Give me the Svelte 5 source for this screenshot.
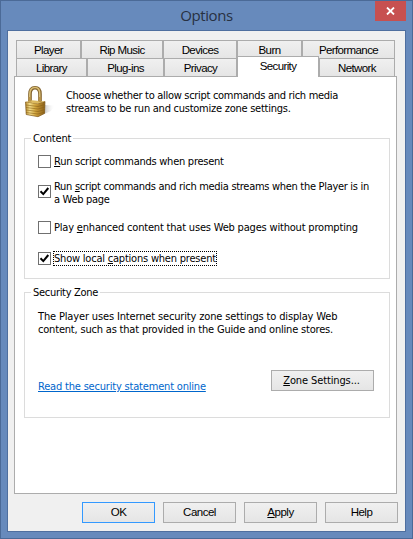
<script>
  const back = [['Player', 65], ['Rip Music', 82], ['Devices', 74], ['Burn', 65], ['Performance', 93]];
  const front = [['Library', 71], ['Plug-ins', 77], ['Privacy', 73], ['Security', 82], ['Network', 76]];
</script>

<div class="window">
  <header>
    <h1>Options</h1>
    <button class="close" aria-label="Close">
      <svg width="9" height="8" viewBox="0 0 9 8"><path d="M1 .5L8 7.5M8 .5L1 7.5" stroke="#fff" stroke-width="1.8" /></svg>
    </button>
  </header>
  <main>
    <nav class="back">
      {#each back as [name, w]}<button class="tab" style:width="{w}px"><span>{name}</span></button>{/each}
    </nav>
    <nav class="front">
      {#each front as [name, w]}<button class="tab" class:active={name === 'Security'} style:width="{w}px"><span>{name}</span></button>{/each}
    </nav>
    <section class="page">
      <div class="intro">
        <svg width="32" height="33" viewBox="0 0 32 33">
          <defs>
            <linearGradient id="brass"><stop offset="0" stop-color="#b98c2e" /><stop offset=".22" stop-color="#f3dd8c" /><stop offset=".5" stop-color="#d3a840" /><stop offset=".62" stop-color="#c09132" /><stop offset="1" stop-color="#8a611a" /></linearGradient>
            <linearGradient id="shade"><stop offset="0" stop-color="#a8a8a8" /><stop offset="1" stop-color="#fff" stop-opacity="0" /></linearGradient>
          </defs>
          <path d="M20 20L31 20.500L27 26L20 29Z" fill="url(#shade)" opacity=".7" />
          <path d="M6 18V9Q6 2.700 11 2.700Q16 2.700 16 9V18" fill="none" stroke="#80602a" stroke-width="3.600" />
          <path d="M5.800 18V9Q6 2.500 11 2.500Q15.800 2.500 15.800 9V18" fill="none" stroke="#d8bd74" stroke-width="1.600" />
          <path d="M1.500 17L13.500 18.500L21 16.500L20.500 28.500L14 31.700L2.200 29.500Z" fill="url(#brass)" stroke="#80591b" stroke-width=".7" />
          <path d="M2 20L14 21.500L21 19.500M2 22.500L14 24L21 22M2 25L14 26.500L21 24.500M2 27.500L14 29L21 27" fill="none" stroke="#8a6218" stroke-width=".8" opacity=".75" />
          <path d="M1.500 17L8 15.300L21 16.500L13.500 18.500Z" fill="#dcb95e" />
          <path d="M5.800 12V16.500M15.900 12V17" stroke="#b8934a" stroke-width="2.600" />
        </svg>
        <p><span class="i1">Choose whether to allow script commands and rich media</span><br /><span class="i2">streams to be run and customize zone settings.</span></p>
      </div>
      <fieldset class="content">
        <legend>Content</legend>
        <label class="c1"><i class="box"></i><span class="l1"><u>R</u>un script commands when present</span></label>
        <label class="c2"><i class="box">{@render tick()}</i><span class="l2">Run <u>s</u>cript commands and rich media streams when the Player is in<br />a Web page</span></label>
        <label class="c3"><i class="box"></i><span class="l3">Play <u>e</u>nhanced content that uses Web pages without prompting</span></label>
        <label class="c4"><i class="box">{@render tick()}</i><span class="l4 focus">Show local <u>c</u>aptions when present</span></label>
      </fieldset>
      <fieldset class="zone">
        <legend>Security Zone</legend>
        <p><span class="z1">The Player uses Internet security zone settings to display Web</span><br /><span class="z2">content, such as that provided in the Guide and online stores.</span></p>
        <div class="actions">
          <a href="#statement">Read the security statement online</a>
          <button class="push wide"><u>Z</u>one Settings...</button>
        </div>
      </fieldset>
    </section>
    <footer>
      <button class="push default">OK</button>
      <button class="push">Cancel</button>
      <button class="push"><u>A</u>pply</button>
      <button class="push">Help</button>
    </footer>
  </main>
</div>

{#snippet tick()}
  <svg width="11" height="11" viewBox="0 0 11 11"><path d="M1.500 5.200L4.300 8.100L9.300 2" fill="none" stroke="#000" stroke-width="2" /></svg>
{/snippet}

<style>
  :global(body) { margin: 0; }
  * { box-sizing: border-box; }
  .window { width: 413px; height: 539px; padding: 0 6px 6px; border: 1px solid #4b6a97; background: #678abc; font: 11px/13px 'DejaVu Sans Condensed', 'DejaVu Sans', sans-serif; font-stretch: condensed; color: #000; }
  header { height: 29px; position: relative; }
  h1 { margin: 0; text-align: center; font: 15px/29px 'Open Sans', sans-serif; letter-spacing: -.4px; color: #273142; }
  button { font: inherit; color: inherit; padding: 0; margin: 0; white-space: nowrap; }
  .close { position: absolute; right: 0; top: 0; width: 31px; height: 20px; border: 0; background: #c75050; display: flex; align-items: center; justify-content: center; }
  main { height: 502px; border: 1px solid #4f6f9f; background: #f0f0f0; padding: 9px 6px 0; }
  nav { display: flex; padding-left: 2px; height: 18px; }
  .tab { height: 18px; padding-top: 2px; border: 1px solid #acacac; border-bottom: 0; background: linear-gradient(#f0f0f0, #e5e5e5); flex: none; }
  .tab, footer .push { font: 11.5px/13px 'Liberation Sans', Arial, sans-serif; letter-spacing: -.6px; }
  footer .push { letter-spacing: -.5px; }
  .tab.active { height: 21px; margin-top: -2px; padding: 0 0 2px; background: #fff; z-index: 1; position: relative; }
  .page { width: 383px; height: 418px; border: 1px solid #acacac; background: #fff; padding: 8px 6px 0 9px; }
  .intro { display: flex; height: 47px; }
  .intro p { margin: 4px 0 0 10px; }
  p { margin: 0; white-space: nowrap; }
  fieldset { margin: 0; min-width: 0; border: 1px solid #dcdcdc; padding: 0 13px; width: 366px; white-space: nowrap; }
  legend { padding: 0 2px; margin-left: -7px; }
  .content { height: 147px; }
  .content legend { letter-spacing: -.15px; }
  .zone { height: 132px; margin-top: 7px; }
  .zone legend { letter-spacing: -.3px; }
  label { display: flex; align-items: center; gap: 3px; }
  .box { width: 13px; height: 13px; border: 1px solid #707070; flex: none; display: flex; }
  .box svg { flex: none; }
  .c1 { margin-top: 10px; }
  .c2 { margin-top: 12px; }
  .c2 .box { margin-bottom: 3px; }
  .c3 { margin-top: 15px; }
  .c4 { margin-top: 18px; }
  .i1 { letter-spacing: -.3px; }
  .i2 { letter-spacing: -.25px; }
  .l1 { letter-spacing: -.26px; }
  .l2 { letter-spacing: -.3px; }
  .l3 { letter-spacing: -.19px; }
  .l4 { letter-spacing: -.21px; }
  .z1 { letter-spacing: -.15px; }
  .z2 { letter-spacing: -.19px; }
  .focus { outline: 1px dotted #000; }
  .zone p { margin-top: 11px; }
  .actions { display: flex; justify-content: space-between; align-items: center; margin-top: 32px; padding-right: 2px; }
  a { color: #0066cc; margin-top: 12px; letter-spacing: -.19px; }
  .push { width: 73px; height: 21px; border: 1px solid #acacac; background: linear-gradient(#f0f0f0, #e5e5e5); }
  .wide { width: 103px; letter-spacing: -.12px; padding-right: 2px; }
  .default { border-color: #3399ff; }
  footer { display: flex; gap: 8px; margin: 8px 0 0 68px; }
</style>
